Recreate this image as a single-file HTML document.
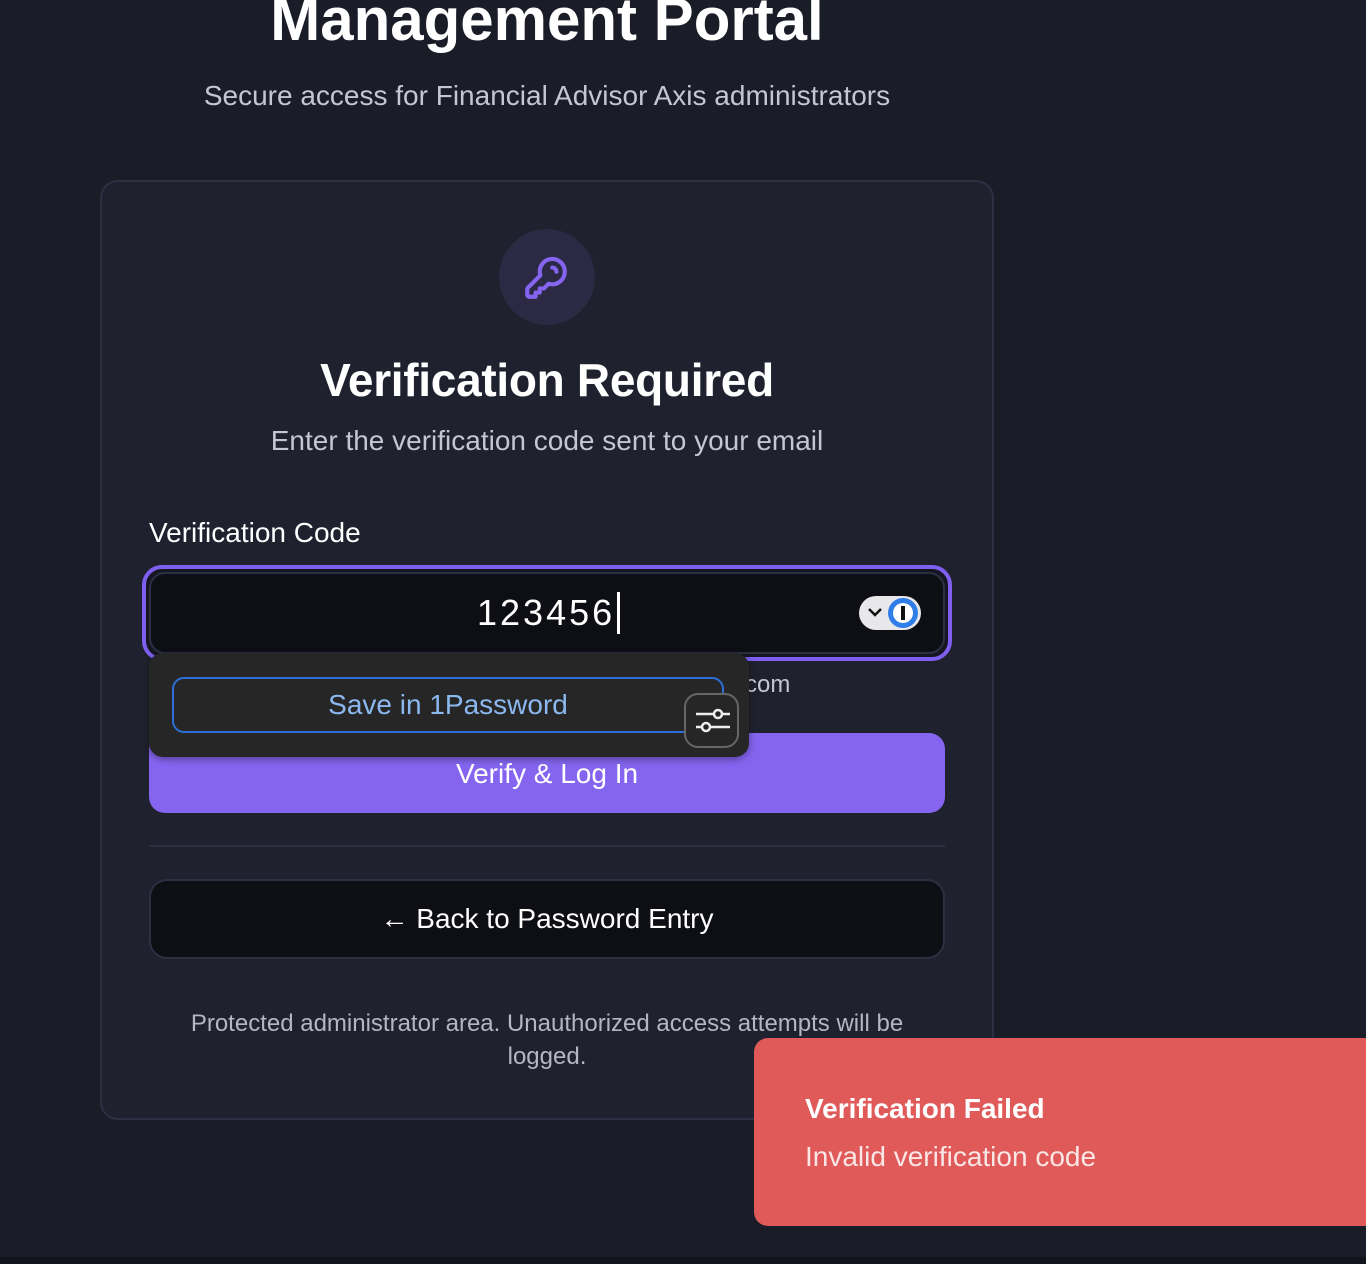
<!DOCTYPE html>
<html><head><meta charset="utf-8"><style>
*{box-sizing:border-box;margin:0;padding:0}
body{width:1366px;height:1264px;background:#1a1c28;font-family:"Liberation Sans",sans-serif;position:relative;overflow:hidden;color:#fff}
.a{position:absolute}
.c{text-align:center}
</style></head><body>
<div class="a c" style="left:0;width:1094px;top:-15px;font-size:60px;font-weight:bold;line-height:70px">Management Portal</div>
<div class="a c" style="left:0;width:1094px;top:79px;font-size:28px;color:#c4c6d2;line-height:34px">Secure access for Financial Advisor Axis administrators</div>
<div class="a" style="left:100px;top:180px;width:894px;height:940px;background:#1f212e;border:2px solid #2d3042;border-radius:18px"></div>
<div class="a" style="left:499px;top:229px;width:96px;height:96px;border-radius:50%;background:#2b2944"></div>
<svg class="a" style="left:521px;top:253px" width="50" height="50" viewBox="0 0 24 24" fill="none" stroke="#8565f0" stroke-width="2" stroke-linecap="round" stroke-linejoin="round"><path d="M15 7a2 2 0 0 1 2 2M21 9a6 6 0 0 1-7.74 5.74L11 17H9v2H7v2H4a1 1 0 0 1-1-1v-2.59a1 1 0 0 1 .29-.7l6-6A6 6 0 1 1 21 9z"/></svg>
<div class="a c" style="left:100px;width:894px;top:352px;font-size:46px;font-weight:bold;line-height:56px;letter-spacing:-0.3px">Verification Required</div>
<div class="a c" style="left:100px;width:894px;top:424px;font-size:28px;color:#c4c6d2;line-height:34px">Enter the verification code sent to your email</div>
<div class="a" style="left:149px;top:516px;font-size:28px;line-height:34px">Verification Code</div>
<div class="a" style="left:142px;top:565px;width:810px;height:96px;border-radius:20px;border:4px solid #7e5ff0;background:#151622"></div>
<div class="a" style="left:149px;top:572px;width:796px;height:82px;border-radius:16px;border:2px solid #2d3042;background:#0e0f15"></div>
<div class="a" style="left:477px;top:592px;font-size:36px;letter-spacing:3px;line-height:42px">123456</div>
<div class="a" style="left:617px;top:592px;width:3px;height:42px;background:#fff"></div>
<div class="a" style="left:859px;top:596px;width:62px;height:34px;border-radius:17px;background:#e8e8ea"></div>
<svg class="a" style="left:866px;top:605px" width="18" height="14" viewBox="0 0 18 14"><path d="M3 4l6 6 6-6" stroke="#111" stroke-width="2.5" fill="none"/></svg>
<div class="a" style="left:888px;top:598px;width:30px;height:30px;border-radius:50%;background:#2f7de8"></div>
<div class="a" style="left:893px;top:603px;width:20px;height:20px;border-radius:50%;background:#fff"></div>
<div class="a" style="left:901px;top:606px;width:4px;height:14px;background:#111"></div>
<div class="a" style="left:745px;top:670px;font-size:24px;color:#c4c6d2;line-height:30px">com</div>
<div class="a" style="left:149px;top:733px;width:796px;height:80px;border-radius:16px;background:#8565f0"></div>
<div class="a c" style="left:149px;width:796px;top:757px;font-size:28px;line-height:34px">Verify &amp; Log In</div>
<div class="a" style="left:149px;top:653px;width:600px;height:104px;border-radius:14px;background:#262627;box-shadow:0 2px 8px rgba(0,0,0,.4)"></div>
<div class="a c" style="left:172px;top:677px;width:552px;height:56px;border-radius:12px;border:2px solid #2e6fd6;font-size:28px;color:#8cb8f0;line-height:52px">Save in 1Password</div>
<div class="a" style="left:684px;top:693px;width:55px;height:55px;border-radius:14px;border:2px solid #666;background:#262627"></div>
<svg class="a" style="left:694px;top:703px" width="36" height="36" viewBox="0 0 36 36" stroke="#eee" stroke-width="2.5" fill="none"><path d="M2 11h34M2 24h34"/><circle cx="24" cy="11" r="4" fill="#262627"/><circle cx="12" cy="24" r="4" fill="#262627"/></svg>
<div class="a" style="left:149px;top:845px;width:796px;height:2px;background:#2d3042"></div>
<div class="a" style="left:149px;top:879px;width:796px;height:80px;border-radius:18px;background:#0e0f15;border:2px solid #2d3042"></div>
<div class="a c" style="left:149px;width:796px;top:902px;font-size:28px;line-height:34px">← Back to Password Entry</div>
<div class="a c" style="left:180px;width:734px;top:1007px;font-size:24px;color:#b4b6c2;line-height:33px">Protected administrator area. Unauthorized access attempts will be logged.</div>
<div class="a" style="left:754px;top:1038px;width:640px;height:188px;border-radius:14px;background:#e05a5a"></div>
<div class="a" style="left:805px;top:1092px;font-size:28px;font-weight:bold;line-height:34px">Verification Failed</div>
<div class="a" style="left:805px;top:1140px;font-size:28px;color:#fbe6e6;line-height:34px">Invalid verification code</div>
<div class="a" style="left:0;top:1257px;width:1366px;height:7px;background:#12141b"></div>
</body></html>
